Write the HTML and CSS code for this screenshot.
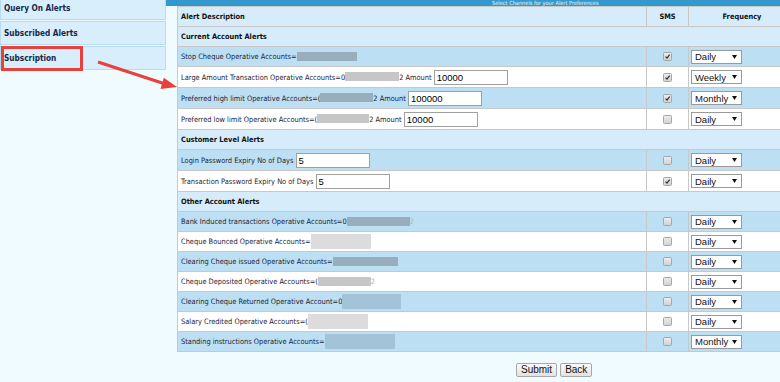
FILE: index.html
```html
<!DOCTYPE html>
<html>
<head>
<meta charset="utf-8">
<link rel="stylesheet" href="styles.css">
</head>
<body>
<div class="page">
  <nav class="sidebar">
    <a class="nav-item">Query On Alerts</a>
    <a class="nav-item">Subscribed Alerts</a>
    <a class="nav-item">Subscription</a>
  </nav>
  <main class="main">
    <div class="bar"><span class="bar-title">Select Channels for your Alert Preferences</span></div>
    <div class="content">
      <table class="grid">
        <colgroup><col class="c-desc"><col class="c-sms"><col class="c-freq"></colgroup>
        <tr class="r-head"><td class="desc b">Alert Description</td><td class="sms b">SMS</td><td class="freq-h b">Frequency</td></tr>
        <tr class="r-sec"><td colspan="3" class="desc b">Current Account Alerts</td></tr>
        <tr class="r-blue"><td class="desc">Stop Cheque Operative Accounts=<span class="mask mb" style="width:60px"></span></td><td class="sms"><span class="cb"><svg viewBox="0 0 9 9"><path d="M2 4.6 L3.9 6.6 L7.2 2.2"/></svg></span></td><td class="freq"><span class="sel">Daily<svg viewBox="0 0 5 4"><polygon points="0,0 5,0 2.5,4"/></svg></span></td></tr>
        <tr class="r-white r-in"><td class="desc">Large Amount Transaction Operative Accounts=0<span class="mask mg" style="width:54px"></span>2 Amount <span class="inp" style="width:74px">10000</span></td><td class="sms"><span class="cb"><svg viewBox="0 0 9 9"><path d="M2 4.6 L3.9 6.6 L7.2 2.2"/></svg></span></td><td class="freq"><span class="sel">Weekly<svg viewBox="0 0 5 4"><polygon points="0,0 5,0 2.5,4"/></svg></span></td></tr>
        <tr class="r-blue r-in"><td class="desc">Preferred high limit Operative Accounts=(<span class="mask mb" style="width:53px"></span>2 Amount <span class="inp" style="width:74px">100000</span></td><td class="sms"><span class="cb"><svg viewBox="0 0 9 9"><path d="M2 4.6 L3.9 6.6 L7.2 2.2"/></svg></span></td><td class="freq"><span class="sel">Monthly<svg viewBox="0 0 5 4"><polygon points="0,0 5,0 2.5,4"/></svg></span></td></tr>
        <tr class="r-white r-in"><td class="desc">Preferred low limit Operative Accounts=(<span class="mask mg" style="width:52px"></span>2 Amount <span class="inp" style="width:74px">10000</span></td><td class="sms"><span class="cb off"></span></td><td class="freq"><span class="sel">Daily<svg viewBox="0 0 5 4"><polygon points="0,0 5,0 2.5,4"/></svg></span></td></tr>
        <tr class="r-sec"><td colspan="3" class="desc b">Customer Level Alerts</td></tr>
        <tr class="r-blue r-in"><td class="desc">Login Password Expiry No of Days <span class="inp" style="width:74px">5</span></td><td class="sms"><span class="cb off"></span></td><td class="freq"><span class="sel">Daily<svg viewBox="0 0 5 4"><polygon points="0,0 5,0 2.5,4"/></svg></span></td></tr>
        <tr class="r-white r-in"><td class="desc">Transaction Password Expiry No of Days <span class="inp" style="width:74px">5</span></td><td class="sms"><span class="cb"><svg viewBox="0 0 9 9"><path d="M2 4.6 L3.9 6.6 L7.2 2.2"/></svg></span></td><td class="freq"><span class="sel">Daily<svg viewBox="0 0 5 4"><polygon points="0,0 5,0 2.5,4"/></svg></span></td></tr>
        <tr class="r-sec"><td colspan="3" class="desc b">Other Account Alerts</td></tr>
        <tr class="r-blue"><td class="desc">Bank Induced transactions Operative Accounts=0<span class="mask mb" style="width:63px"></span><span class="faint">2</span></td><td class="sms"><span class="cb off"></span></td><td class="freq"><span class="sel">Daily<svg viewBox="0 0 5 4"><polygon points="0,0 5,0 2.5,4"/></svg></span></td></tr>
        <tr class="r-white"><td class="desc">Cheque Bounced Operative Accounts=<span class="mask ml tall" style="width:60px"></span></td><td class="sms"><span class="cb off"></span></td><td class="freq"><span class="sel">Daily<svg viewBox="0 0 5 4"><polygon points="0,0 5,0 2.5,4"/></svg></span></td></tr>
        <tr class="r-blue"><td class="desc">Clearing Cheque issued Operative Accounts=<span class="mask mb" style="width:65px"></span></td><td class="sms"><span class="cb off"></span></td><td class="freq"><span class="sel">Daily<svg viewBox="0 0 5 4"><polygon points="0,0 5,0 2.5,4"/></svg></span></td></tr>
        <tr class="r-white"><td class="desc">Cheque Deposited Operative Accounts=(<span class="mask mg" style="width:53px"></span><span class="faint">2</span></td><td class="sms"><span class="cb off"></span></td><td class="freq"><span class="sel">Daily<svg viewBox="0 0 5 4"><polygon points="0,0 5,0 2.5,4"/></svg></span></td></tr>
        <tr class="r-blue"><td class="desc">Clearing Cheque Returned Operative Account=0<span class="mask mc tall" style="width:59px"></span></td><td class="sms"><span class="cb off"></span></td><td class="freq"><span class="sel">Daily<svg viewBox="0 0 5 4"><polygon points="0,0 5,0 2.5,4"/></svg></span></td></tr>
        <tr class="r-white"><td class="desc">Salary Credited Operative Accounts=(<span class="mask ml tall" style="width:60px"></span></td><td class="sms"><span class="cb off"></span></td><td class="freq"><span class="sel">Daily<svg viewBox="0 0 5 4"><polygon points="0,0 5,0 2.5,4"/></svg></span></td></tr>
        <tr class="r-blue"><td class="desc">Standing instructions Operative Accounts=<span class="mask mc tall" style="width:70px"></span></td><td class="sms"><span class="cb off"></span></td><td class="freq"><span class="sel">Monthly<svg viewBox="0 0 5 4"><polygon points="0,0 5,0 2.5,4"/></svg></span></td></tr>
      </table>
      <div class="actions"><button class="btn">Submit</button><button class="btn">Back</button></div>
    </div>
  </main>
  <div class="highlight"></div>
  <svg class="arrow" width="100" height="40" viewBox="0 0 100 40">
    <line x1="2" y1="2" x2="70" y2="24.3"/>
    <polygon points="81,27 67.8,17.8 64.5,29"/>
  </svg>
</div>
</body>
</html>
```
FILE: styles.css
```css
html, body {
  margin: 0;
  padding: 0;
}
body {
  background: #f0fbff;
  font-family: "DejaVu Sans Condensed", "DejaVu Sans", sans-serif;
  overflow: hidden;
}
.page {
  position: relative;
  display: flex;
  width: 780px;
  height: 382px;
}
.sidebar {
  width: 166px;
  flex: none;
  display: flex;
  flex-direction: column;
  gap: 1px;
  margin-top: -4px;
}
.nav-item {
  height: 24px;
  box-sizing: border-box;
  border: 1px solid #b8dbf2;
  background: #d8eefc;
  color: #1a2747;
  font-weight: bold;
  font-size: 8.2px;
  padding-left: 3px;
  display: flex;
  align-items: center;
}
.main {
  flex: 1;
  min-width: 0;
  overflow: hidden;
}
.bar {
  height: 6px;
  background: #3399cc;
  padding-left: 326px;
}
.bar-title {
  display: block;
  color: #e8f4fb;
  font-size: 5.6px;
  line-height: 6px;
  white-space: nowrap;
}
.content {
  padding-left: 11px;
}
.grid {
  border-collapse: collapse;
  table-layout: fixed;
  width: 618px;
  font-size: 7.4px;
  color: #1c1c33;
}
.c-desc { width: 469px; }
.c-sms { width: 42px; }
.c-freq { width: 107px; }
.grid td {
  border: 1px solid #c8c8c8;
  height: 19px;
  padding: 0;
  white-space: nowrap;
  vertical-align: middle;
}
.grid tr.r-in td {
  height: 20px;
}
.r-head td, .r-sec td { background: #d7ecfa; }
.r-blue td { background: #bddff4; }
.r-white td { background: #ffffff; }
.desc { padding-left: 3px !important; }
.b { font-weight: bold; color: #111; }
.sms { text-align: center; }
.freq-h { text-align: center; }
.freq { padding-left: 2px !important; }
.mask {
  display: inline-block;
  height: 9px;
  vertical-align: middle;
  margin-top: -1px;
}
.mask.tall { height: 15px; }
.mb { background: #98aebd; }
.mg { background: #c6c6c6; }
.ml { background: #dcdcdc; }
.mc { background: #a3c3d8; }
.faint { color: #b8b8a0; }
.inp {
  display: inline-block;
  box-sizing: border-box;
  height: 15px;
  line-height: 13px;
  border: 1px solid #a0a0a0;
  background: #fff;
  font-family: "Liberation Sans", Arial, sans-serif;
  font-size: 9.5px;
  color: #000;
  padding-left: 2px;
  vertical-align: middle;
}
.cb {
  display: inline-block;
  width: 9px;
  height: 9px;
  box-sizing: border-box;
  border: 1px solid #a6a6a6;
  border-radius: 1.5px;
  background: linear-gradient(#ececec, #d2d2d2);
  vertical-align: middle;
}
.cb svg {
  display: block;
  width: 7px;
  height: 7px;
}
.cb path {
  fill: none;
  stroke: #2a2a2a;
  stroke-width: 1.5;
}
.sel {
  position: relative;
  display: inline-flex;
  align-items: center;
  box-sizing: border-box;
  width: 51px;
  height: 14px;
  border: 1px solid #9a9a9a;
  background: #fff;
  font-family: "Liberation Sans", Arial, sans-serif;
  font-size: 9.5px;
  color: #111;
  padding-left: 3px;
  vertical-align: middle;
}
.sel svg {
  position: absolute;
  right: 4px;
  top: 4px;
  width: 5px;
  height: 4px;
}
.sel polygon { fill: #111; }
.actions {
  padding-left: 339px;
  padding-top: 11px;
  display: flex;
  gap: 3px;
}
.btn {
  height: 14px;
  padding: 0 4px;
  border: 1px solid #a8a8a8;
  border-radius: 2px;
  background: linear-gradient(#fafafa, #e2e2e2);
  font-family: "Liberation Sans", Arial, sans-serif;
  font-size: 10px;
  color: #111;
  line-height: 12px;
}
.highlight {
  position: absolute;
  left: 1px;
  top: 46px;
  width: 82px;
  height: 25px;
  box-sizing: border-box;
  border: 3px solid #e8413c;
}
.arrow {
  position: absolute;
  left: 96px;
  top: 60px;
  overflow: visible;
}
.arrow line {
  stroke: #e8413c;
  stroke-width: 3;
}
.arrow polygon { fill: #e8413c; }
```
